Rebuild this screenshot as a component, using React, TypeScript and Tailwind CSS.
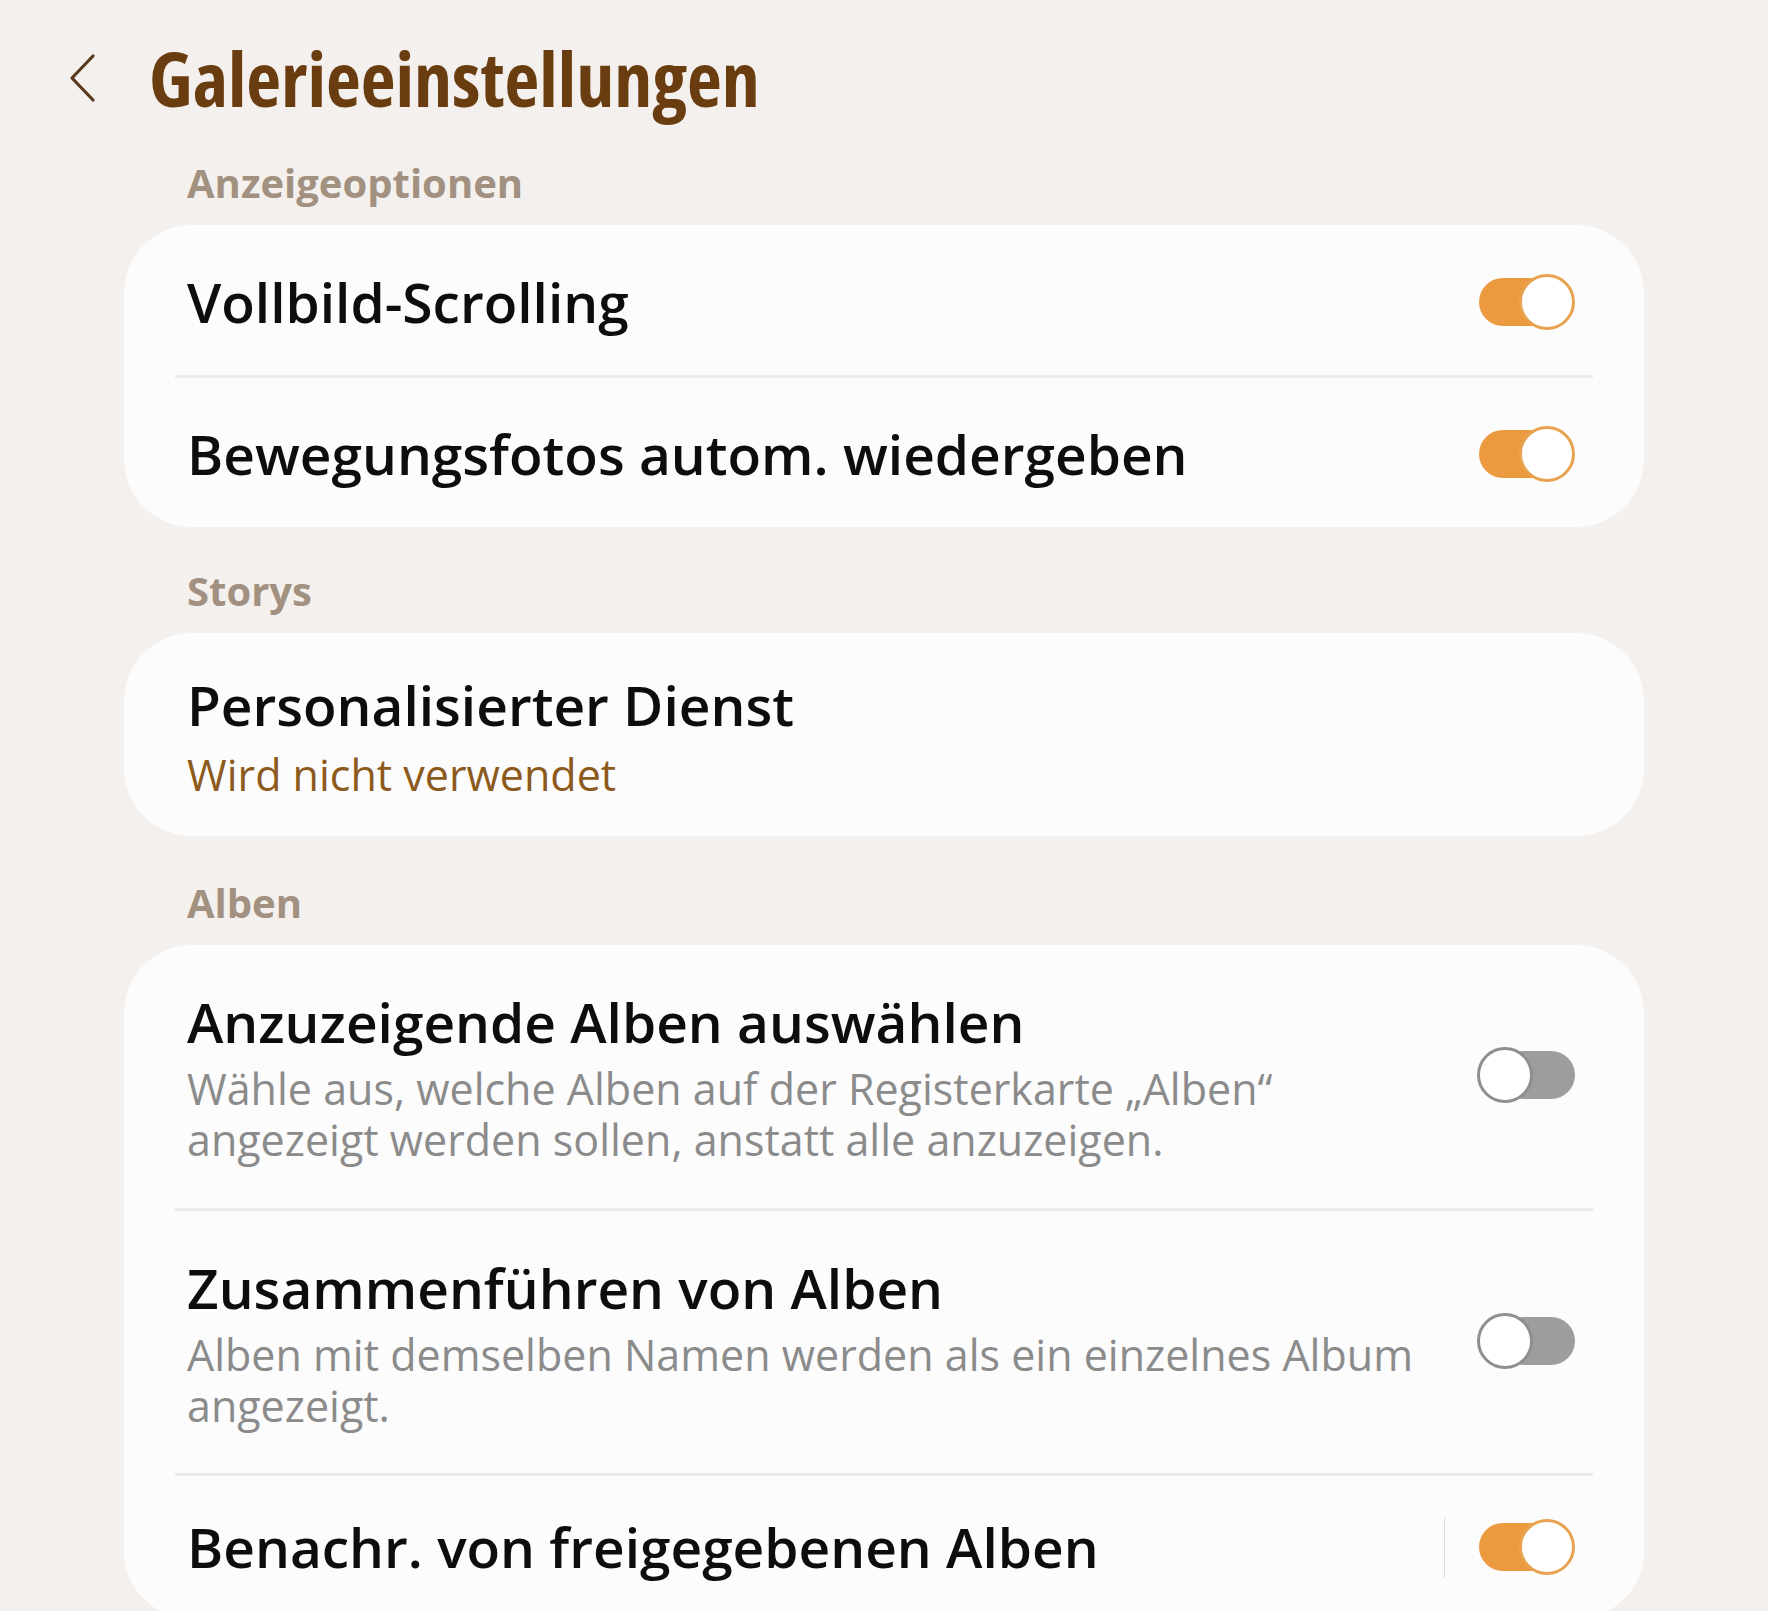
import { Fragment } from "react";

type Row = {
  title: string;
  lines?: string[];
  accent?: string;
  toggle?: "on" | "off";
  split?: boolean;
  pad: string;
};

const Toggle = ({ on }: { on: boolean }) => {
  if (on) {
    return (
      <div className="relative h-[56px] w-[96px] shrink-0">
        <div className="absolute left-0 top-[4px] h-[48px] w-[80px] rounded-full bg-[#ec9a3f]" />
        <div className="absolute right-0 top-0 size-[56px] rounded-full border-[3px] border-[#e7a350] bg-white" />
      </div>
    );
  }
  return (
    <div className="relative h-[56px] w-[98px] shrink-0">
      <div className="absolute right-0 top-[4px] h-[48px] w-[76px] rounded-full bg-[#9d9d9d]" />
      <div className="absolute left-0 top-0 size-[56px] rounded-full border-[3px] border-[#8f8f8f] bg-white" />
    </div>
  );
};

const SettingRow = ({ row }: { row: Row }) => (
  <div className={`flex items-center pl-[63px] pr-[69px] ${row.pad}`}>
    <div className="flex-1">
      <div className="text-[55px] font-semibold leading-[64px] text-[#0d0d0d]">{row.title}</div>
      {row.accent && <div className="mt-[12px] text-[43px] font-medium leading-[52px] text-[#8c5a1c]">{row.accent}</div>}
      {row.lines && (
        <div className="mt-[9px] text-[43px] font-medium leading-[51px] text-[#8b8b8b]">
          {row.lines.map((l) => (
            <div key={l} className="whitespace-nowrap">
              {l}
            </div>
          ))}
        </div>
      )}
    </div>
    {row.split && <div className="mr-[34px] h-[61px] w-px bg-[#dcdcdc]" />}
    {row.toggle && (
      <div className={row.lines ? "-mt-[6px]" : ""}>
        <Toggle on={row.toggle === "on"} />
      </div>
    )}
  </div>
);

const Section = ({ label, rows, gap }: { label: string; rows: Row[]; gap: string }) => (
  <div className={gap}>
    <div className="pl-[63px] text-[40px] font-bold leading-[48px] text-[#a29180]">{label}</div>
    <div className="mt-[18px] rounded-[68px] bg-[#fcfcfc]">
      {rows.map((row, i) => (
        <Fragment key={row.title}>
          {i > 0 && <div className="mx-[51px] h-[3px] bg-[#ebebeb]" />}
          <SettingRow row={row} />
        </Fragment>
      ))}
    </div>
  </div>
);

export default function App() {
  return (
    <div className="h-[1611px] overflow-hidden bg-[#f4f0ed] font-['Open_Sans',sans-serif]">
      <div className="flex items-center pl-[67px] pt-[42px]">
        <svg width="30" height="50" viewBox="0 0 30 50" fill="none" className="shrink-0">
          <path d="M26 3 L5 25 L26 47" stroke="#5b3a1c" strokeWidth="3.2" strokeLinecap="round" strokeLinejoin="round" />
        </svg>
        <h1 className="ml-[52px] text-[76px] font-bold leading-[72px] text-[#6a3d10] [font-stretch:75%]">
          Galerieeinstellungen
        </h1>
      </div>
      <div className="mx-[124px] pb-10">
        <Section
          label="Anzeigeoptionen"
          gap="mt-[45px]"
          rows={[
            { title: "Vollbild-Scrolling", toggle: "on", pad: "pt-[45px] pb-[41px]" },
            { title: "Bewegungsfotos autom. wiedergeben", toggle: "on", pad: "pt-[44px] pb-[41px]" },
          ]}
        />
        <Section
          label="Storys"
          gap="mt-[40px]"
          rows={[{ title: "Personalisierter Dienst", accent: "Wird nicht verwendet", pad: "pt-[40px] pb-[35px]" }]}
        />
        <Section
          label="Alben"
          gap="mt-[43px]"
          rows={[
            {
              title: "Anzuzeigende Alben auswählen",
              lines: ["Wähle aus, welche Alben auf der Registerkarte „Alben“", "angezeigt werden sollen, anstatt alle anzuzeigen."],
              toggle: "off",
              pad: "pt-[45px] pb-[43px]",
            },
            {
              title: "Zusammenführen von Alben",
              lines: ["Alben mit demselben Namen werden als ein einzelnes Album", "angezeigt."],
              toggle: "off",
              pad: "pt-[45px] pb-[42px]",
            },
            { title: "Benachr. von freigegebenen Alben", toggle: "on", split: true, pad: "pt-[39px] pb-[40px]" },
          ]}
        />
      </div>
    </div>
  );
}
